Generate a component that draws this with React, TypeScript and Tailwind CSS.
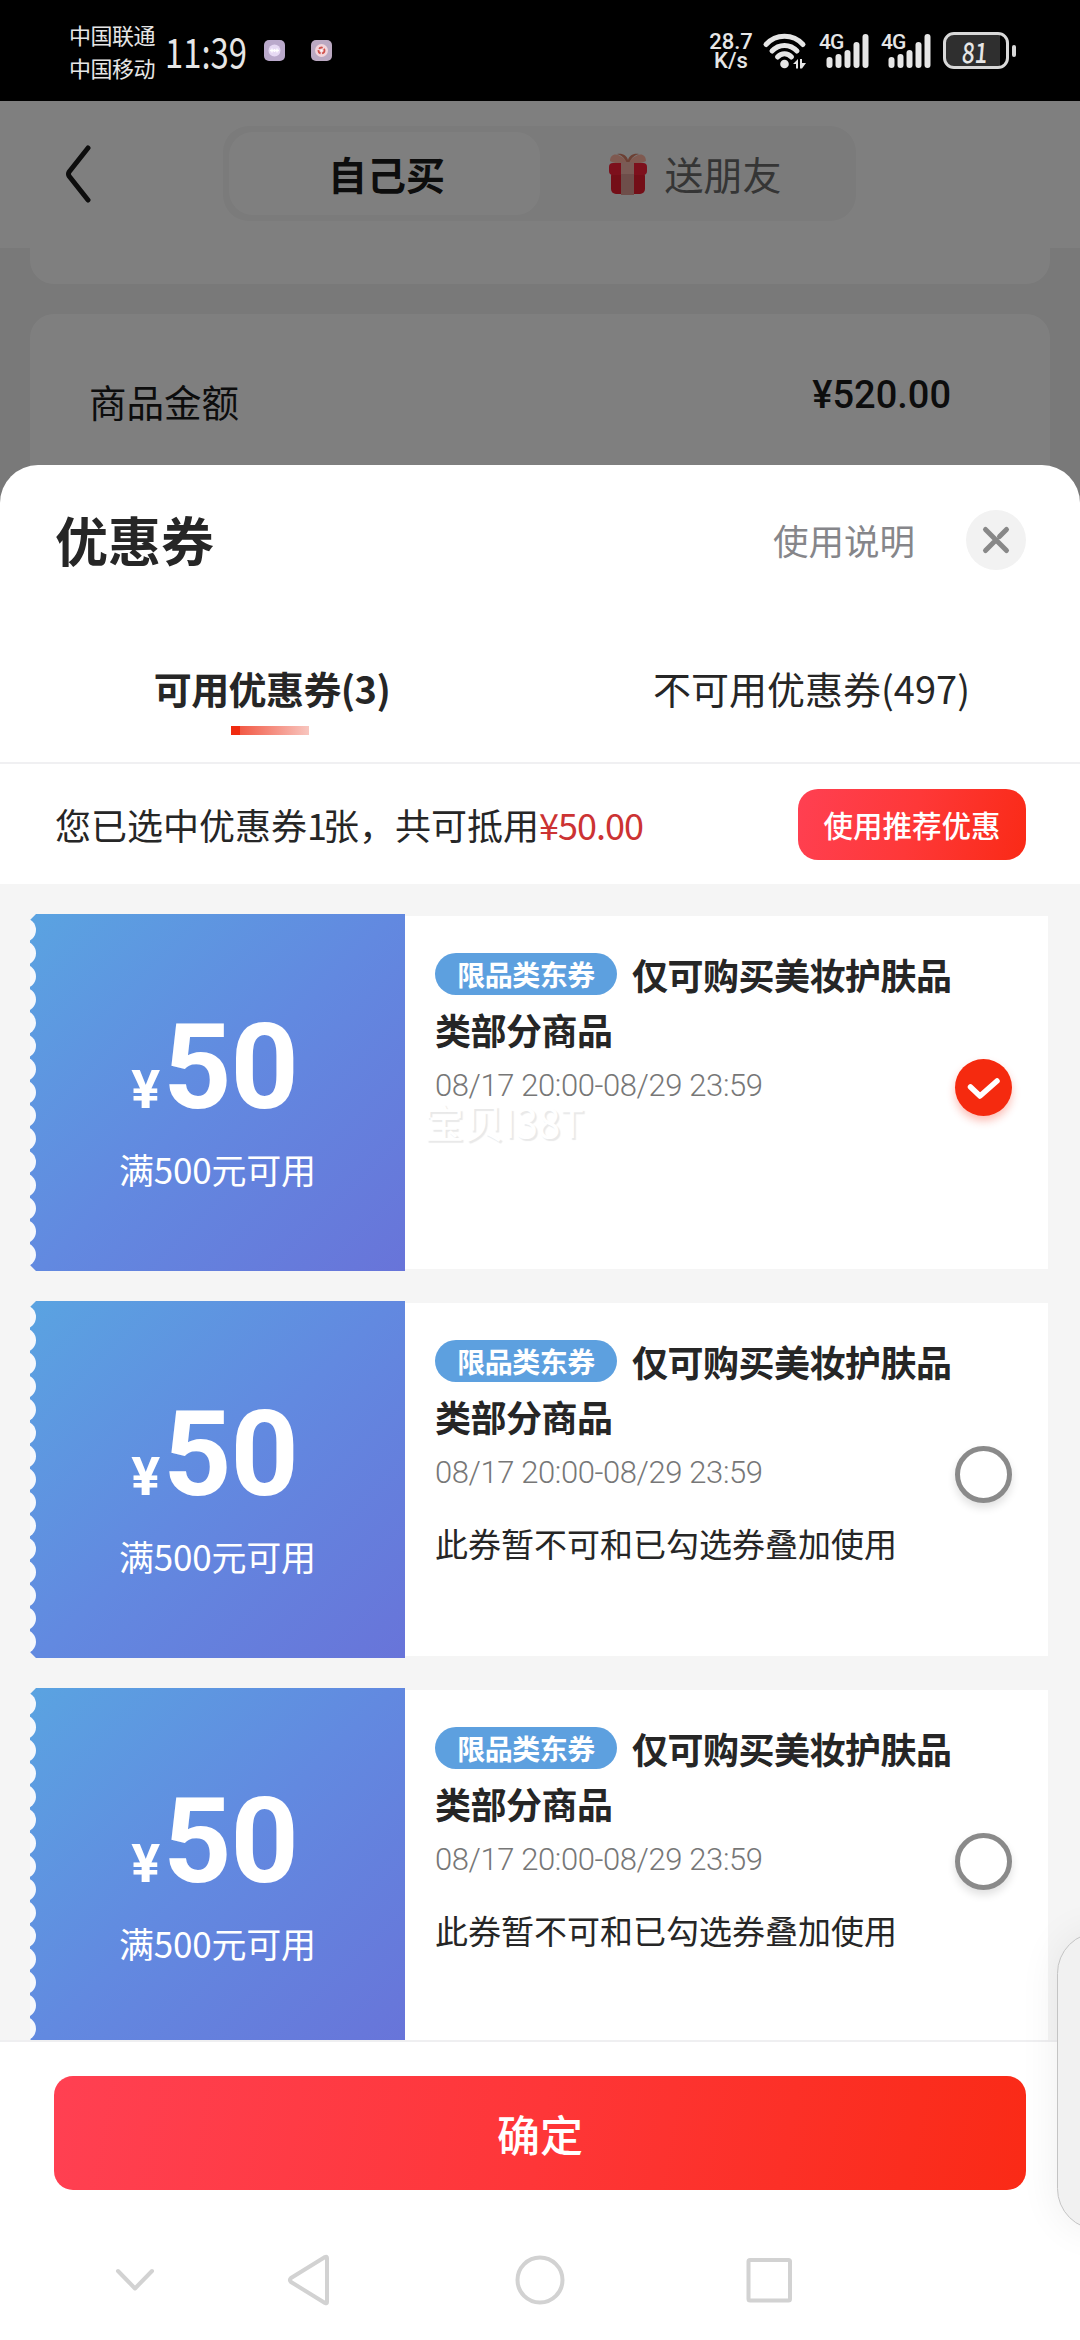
import React from "react";

const coupons = [
  { checked: true, note: "", watermark: "宝贝I38T" },
  { checked: false, note: "此券暂不可和已勾选券叠加使用", watermark: "" },
  { checked: false, note: "此券暂不可和已勾选券叠加使用", watermark: "" },
];

function Signal() {
  return (
    <div className="flex h-[36px] w-[52px]">
      <span className="-mr-[17px] w-[24px] font-[Roboto] text-[21px] leading-[18px] font-medium -tracking-[1px]">4G</span>
      <svg viewBox="0 0 45 36" className="h-[36px] w-[45px] shrink-0" fill="#e6e6e6">
        <rect x="0.500" y="24" width="6" height="11" rx="3" />
        <rect x="9.500" y="21" width="6" height="14" rx="3" />
        <rect x="18.500" y="17" width="6" height="18" rx="3" />
        <rect x="27.500" y="9" width="6" height="26" rx="3" />
        <rect x="36.500" y="1" width="6" height="34" rx="3" />
      </svg>
    </div>
  );
}

function StatusBar() {
  return (
    <div className="flex h-[101px] items-center bg-black pl-[69px] text-[#e6e6e6]">
      <div className="flex w-[88px] flex-col text-[22px] leading-[33px] -tracking-[0.5px]">
        <span>中国联通</span>
        <span>中国移动</span>
      </div>
      <div className="ml-[8px] w-[81px] text-[41px] leading-none whitespace-nowrap">
        <span className="inline-block origin-left scale-x-[0.8]">11:39</span>
      </div>
      <div className="ml-[18px] flex gap-[26px]">
        <svg viewBox="0 0 21 21" className="h-[21px] w-[21px]">
          <rect width="21" height="21" rx="5" fill="#baa9cb" />
          <circle cx="10.5" cy="10.5" r="6" fill="#e6d9f3" />
          <path d="M6 10.5h9M8 8.5v4M10.5 9v3M13 8.5v4" stroke="#fff" strokeWidth="1.3" />
        </svg>
        <svg viewBox="0 0 21 21" className="h-[21px] w-[21px]">
          <rect width="21" height="21" rx="5" fill="#bba9c2" />
          <circle cx="10.5" cy="10.5" r="6.5" fill="#f3d6dc" />
          <circle cx="10.5" cy="10.5" r="3" fill="none" stroke="#d0504a" strokeWidth="1.8" strokeDasharray="4 1.5" />
          <circle cx="10.5" cy="10.5" r="1" fill="#fff" />
        </svg>
      </div>
      <div className="ml-[377px] flex w-[44px] flex-col items-center font-[Roboto] text-[22px] leading-[19px] font-medium">
        <span>28.7</span>
        <span>K/s</span>
      </div>
      <svg viewBox="0 0 46 36" className="ml-[9px] h-[36px] w-[46px]" fill="none" stroke="#e6e6e6" strokeWidth="5" strokeLinecap="round">
        <path d="M4 11.5C14 0.5 31 0.5 41 11.5" />
        <path d="M10 18C17 10.5 28 10.5 35 18" />
        <path d="M15.500 24C19.500 19.500 25.500 19.500 29.500 24" />
        <circle cx="22.500" cy="31" r="4.300" fill="#e6e6e6" stroke="none" />
        <path d="M31 31l5-5v9.500h-2v-4.500zM38 26h2v4h4l-4 5.500h-2z" fill="#e6e6e6" stroke="none" />
      </svg>
      <div className="ml-[11px] flex gap-[10px]">
        <Signal />
        <Signal />
      </div>
      <div className="ml-[10px] flex h-[37px] w-[66px] items-center justify-center rounded-[11px] border-[3px] border-[#d8d8d8] bg-[linear-gradient(90deg,#2f2f2f_90%,#000_90%)] pr-[3px] text-[28px] leading-none font-medium">
        <span className="scale-x-[0.8] -skew-x-6">81</span>
      </div>
      <div className="ml-[3px] h-[12px] w-[4px] rounded-full bg-[#d8d8d8]" />
    </div>
  );
}

function Gift() {
  return (
    <svg viewBox="0 0 40 42" className="h-[42px] w-[40px]">
      <path d="M19 10C14 11 7 11 2 8C2 2 7 0 12 3C16 5 18 7 19 10Z" fill="#ffb3a0" />
      <path d="M21 10C26 11 33 11 38 8C38 2 33 0 28 3C24 5 22 7 21 10Z" fill="#ffb3a0" />
      <path d="M19 10C16 4 13 2 9 1C15 0 19 3 20 7C21 3 25 0 31 1C27 2 24 4 21 10Z" fill="#d98068" />
      <rect x="3" y="18" width="34" height="23" rx="5" fill="#e81c2e" />
      <rect x="1" y="10" width="38" height="12" rx="4" fill="#fa2038" />
      <rect x="13" y="9" width="13" height="33" fill="#dc9c94" />
      <rect x="13" y="9" width="13" height="12" fill="#f5b6aa" />
    </svg>
  );
}

function OrderPage() {
  return (
    <div className="relative h-[420px] bg-[#f2f2f2]">
      <div className="flex h-[147px] bg-white pt-[25px]">
        <svg viewBox="0 0 30 60" className="mt-[17px] ml-[63px] h-[60px] w-[30px]" fill="none" stroke="#1a1a1a" strokeWidth="5" strokeLinecap="round" strokeLinejoin="round">
          <path d="M25 5L6 29Q5 31 6 33L25 57" />
        </svg>
        <div className="ml-[130px] flex h-[95px] w-[633px] rounded-[26px] bg-[#f6f6f6] p-[6px]">
          <div className="flex w-[311px] items-center justify-center rounded-[24px] bg-white pl-[4px] text-[39px] font-bold text-[#1a1a1a]">
            自己买
          </div>
          <div className="flex flex-1 items-center justify-center gap-[16px] text-[39px] text-[#6a6a6a]">
            <Gift />
            <span>送朋友</span>
          </div>
        </div>
      </div>
      <div className="mx-[30px] h-[36px] rounded-b-[24px] bg-white" />
      <div className="mx-[30px] mt-[30px] flex h-[220px] justify-between rounded-t-[24px] bg-white pt-[58px] pr-[99px] pl-[59px] text-[#1a1a1a]">
        <span className="pt-[2px] text-[37.5px] leading-[54px]">商品金额</span>
        <span className="font-[Roboto] text-[38px] leading-[46px] font-medium">¥520.00</span>
      </div>
      <div className="absolute inset-0 bg-black/50" />
    </div>
  );
}

function Radio({ checked }: { checked: boolean }) {
  if (!checked) {
    return <div className="h-[57px] w-[57px] rounded-full border-[5px] border-[#8a8a8a] bg-white shadow-[0_5px_8px_rgba(0,0,0,0.12)]" />;
  }
  return (
    <div className="flex h-[57px] w-[57px] items-center justify-center rounded-full bg-[#f52a0f] shadow-[0_5px_8px_rgba(245,42,15,0.3)]">
      <svg viewBox="0 0 36 24" className="mt-[3px] h-[24px] w-[36px]" fill="none" stroke="#fff" strokeWidth="5.500" strokeLinecap="round" strokeLinejoin="round">
        <path d="M4.500 10L14 19L31 4" />
      </svg>
    </div>
  );
}

function Coupon({ checked, note, watermark }: { checked: boolean; note: string; watermark: string }) {
  return (
    <div className="flex h-[357px] shrink-0 items-center">
      <div className="relative flex h-[357px] w-[375px] flex-col items-center bg-[linear-gradient(135deg,#5aa3e1_0%,#6289e0_50%,#6874d9_100%)] text-white">
        {/* perforated edge */}
        <svg viewBox="0 0 8 357" className="absolute top-0 left-0 h-[357px] w-[8px]" fill="#f6f8fc">
          {Array.from({ length: 15 }, (_, i) => (
            <circle key={i} cx="-6" cy={16 + i * 23.2} r="12" />
          ))}
          <path d="M0 0h6L0 6zM0 357h6L0 351z" fill="#f5f5f5" />
        </svg>
        <div className="mt-[96px] mr-[6px] flex items-baseline font-[Roboto] leading-[116px] font-bold">
          <span className="mr-[3px] text-[54px]">¥</span>
          <span className="text-[119px] -tracking-[1px]">50</span>
        </div>
        <div className="mt-[3px] text-[35px] leading-[36px] -tracking-[0.2px]">满500元可用</div>
      </div>
      <div className="relative flex h-[353px] w-[643px] bg-white">
        <div className="w-[580px] pt-[31px] pl-[30px]">
          <div className="w-[530px] text-[36px] leading-[55px] font-bold -tracking-[0.5px] text-[#262626]">
            <span className="mr-[15px] inline-flex h-[42px] w-[182px] items-center justify-center rounded-full bg-[#5da0df] align-[4px] text-[28px] leading-[30px] text-white">
              限品类东券
            </span>
            仅可购买美妆护肤品类部分商品
          </div>
          <div className="mt-[12px] font-[Roboto] text-[31px] leading-[34px] font-light -tracking-[0.4px] text-[#777]">
            08/17 20:00-08/29 23:59
          </div>
          {note && <div className="mt-[29px] text-[33px] leading-[48px] whitespace-nowrap text-[#262626]">{note}</div>}
        </div>
        <div className="absolute top-[143px] right-[36px]">
          <Radio checked={checked} />
        </div>
        {watermark && (
          <div className="absolute top-[187px] left-[19px] text-[40px] leading-[36px] text-white [text-shadow:2px_2px_1px_rgba(0,0,0,0.09)]">
            {watermark}
          </div>
        )}
      </div>
    </div>
  );
}

function CouponSheet() {
  return (
    <div className="absolute inset-x-0 top-[465px] bottom-0 flex flex-col rounded-t-[38px] bg-white text-[#262626]">
      <div className="flex h-[150px] items-center pr-[54px] pl-[55px]">
        <h1 className="flex-1 text-[53px] font-bold">优惠券</h1>
        <span className="mr-[51px] text-[35.5px] text-[#86868a]">使用说明</span>
        <button className="flex h-[60px] w-[60px] items-center justify-center rounded-full bg-[#f2f2f2]">
          <svg viewBox="0 0 30 30" className="h-[30px] w-[30px]" fill="none" stroke="#888" strokeWidth="5" strokeLinecap="round">
            <path d="M4.500 4.500L25.500 25.500M25.500 4.500L18.500 11.500M4.500 25.500L15 15" />
          </svg>
        </button>
      </div>

      <div className="flex h-[149px] border-b-2 border-[#f0f0f2] pt-[46px] text-[38px] leading-[54px]">
        <div className="flex w-1/2 flex-col items-center">
          <span className="pl-[4px] font-bold -tracking-[0.6px]">可用优惠券(3)</span>
          <div className="mt-[11px] h-[9px] w-[78px] bg-[linear-gradient(90deg,#f02b10_0_9px,#f25a46_9px,#f8c6bf_78px)]" />
        </div>
        <div className="flex w-1/2 justify-center pl-[3px]">
          <span>不可用优惠券(497)</span>
        </div>
      </div>

      <div className="flex h-[120px] items-center pr-[54px] pl-[55px] text-[36px]">
        <p className="flex-1 whitespace-nowrap">
          您已选中优惠券<span className="-tracking-[4px]">1</span>张，共可抵用<span className="-tracking-[1px] text-[#cc3333]">¥50.00</span>
        </p>
        <button className="h-[71px] w-[228px] rounded-[20px] bg-[linear-gradient(105deg,#ff4052_0%,#fe3838_50%,#fa2a16_100%)] text-[29.5px] font-medium text-white">
          使用推荐优惠
        </button>
      </div>

      <div className="flex h-[1156px] flex-col gap-[30px] overflow-hidden bg-[#f5f5f5] pt-[30px] pl-[30px]">
        {coupons.map((coupon, idx) => (
          <Coupon key={idx} {...coupon} />
        ))}
      </div>

      <div className="border-t-2 border-[#efeff1] px-[54px] pt-[34px]">
        <button className="h-[114px] w-full rounded-[19px] bg-[linear-gradient(100deg,#ff4052_0%,#fe3638_50%,#fa2a16_100%)] text-[43px] font-medium text-white">
          确定
        </button>
      </div>

      <svg viewBox="0 0 1080 100" className="mt-[40px] h-[100px] w-full" fill="none" stroke="#d2d2d2" strokeWidth="4" strokeLinecap="round" strokeLinejoin="round">
        <path d="M118 41L135 58.500L152 41" />
        <path d="M327 28V72Q327 74 325 73L291 52Q289 50 291 48L325 27Q327 26 327 28Z" />
        <circle cx="540" cy="50" r="22.500" />
        <rect x="748.500" y="30" width="41.500" height="40.500" rx="1.500" />
      </svg>
    </div>
  );
}

export default function App() {
  return (
    <div className="relative h-[2340px] w-[1080px] overflow-hidden bg-[#797979] font-['Noto_Sans_CJK_SC',sans-serif]">
      <StatusBar />
      <OrderPage />
      <CouponSheet />
      {/* edge handle */}
      <div className="absolute top-[1932px] -right-[60px] h-[298px] w-[83px] rounded-[44px] border border-[#c4c4c4] bg-[#f1f1f1] shadow-[0_0_40px_rgba(0,0,0,0.07)]" />
    </div>
  );
}
